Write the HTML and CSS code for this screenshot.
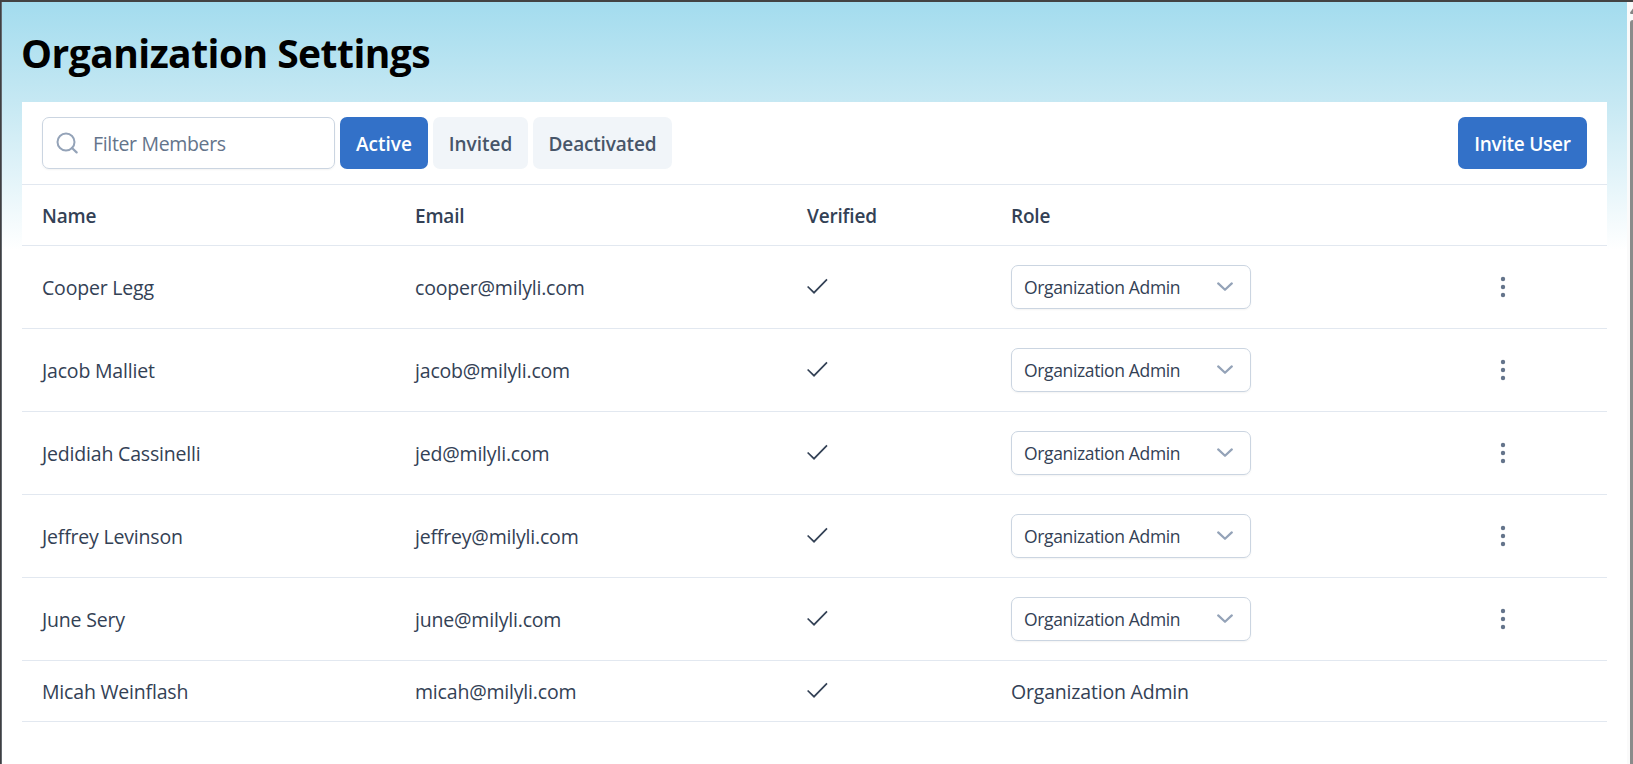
FILE: index.html
```html
<!DOCTYPE html>
<html lang="en">
<head>
    <meta charset="UTF-8">
    <meta name="viewport" content="width=device-width, initial-scale=1.0">
    <title>Organization Settings</title>
    <link rel="stylesheet" href="styles.css">
</head>
<body>

    <!-- Shared icons -->
    <svg class="sprite" width="0" height="0">
        <symbol id="check" viewBox="0 0 22 16">
            <path d="M0.6 8.5 L7 14.7 L20 1.4" fill="none" stroke="currentColor" stroke-width="1.7"/>
        </symbol>
        <symbol id="chevron" viewBox="0 0 16 10">
            <path d="M1.2 1.4 L8 7.8 L14.8 1.4" fill="none" stroke="currentColor" stroke-width="2.2" stroke-linecap="round" stroke-linejoin="round"/>
        </symbol>
        <symbol id="dots" viewBox="0 0 6 22">
            <circle cx="3" cy="3" r="2.2" fill="currentColor"/>
            <circle cx="3" cy="11" r="2.2" fill="currentColor"/>
            <circle cx="3" cy="19" r="2.2" fill="currentColor"/>
        </symbol>
    </svg>

    <div class="window">
        <div class="page">
            <h1>Organization Settings</h1>

            <div class="panel">
                <!-- Toolbar -->
                <div class="toolbar">
                    <div class="search">
                        <svg width="22" height="22" viewBox="0 0 22 22">
                            <circle cx="10" cy="10" r="8.5" fill="none" stroke="#94a3b8" stroke-width="2"/>
                            <path d="M16 16 L20.6 20.4" stroke="#94a3b8" stroke-width="2.2" stroke-linecap="round"/>
                        </svg>
                        <input type="text" placeholder="Filter Members">
                    </div>
                    <button class="btn active">Active</button>
                    <button class="btn invited">Invited</button>
                    <button class="btn deactivated">Deactivated</button>
                    <button class="btn active invite">Invite User</button>
                </div>

                <!-- Members -->
                <table>
                    <colgroup>
                        <col class="col-name">
                        <col class="col-email">
                        <col class="col-verified">
                        <col class="col-role">
                        <col>
                    </colgroup>
                    <thead>
                        <tr>
                            <th>Name</th>
                            <th>Email</th>
                            <th>Verified</th>
                            <th>Role</th>
                            <th></th>
                        </tr>
                    </thead>
                    <tbody>
                        <tr>
                            <td>Cooper Legg</td>
                            <td class="email">cooper@milyli.com</td>
                            <td><svg class="check"><use href="#check"/></svg></td>
                            <td><div class="select"><span>Organization Admin</span><svg class="chevron"><use href="#chevron"/></svg></div></td>
                            <td><div class="menu"><svg class="dots"><use href="#dots"/></svg></div></td>
                        </tr>
                        <tr>
                            <td>Jacob Malliet</td>
                            <td class="email">jacob@milyli.com</td>
                            <td><svg class="check"><use href="#check"/></svg></td>
                            <td><div class="select"><span>Organization Admin</span><svg class="chevron"><use href="#chevron"/></svg></div></td>
                            <td><div class="menu"><svg class="dots"><use href="#dots"/></svg></div></td>
                        </tr>
                        <tr>
                            <td>Jedidiah Cassinelli</td>
                            <td class="email">jed@milyli.com</td>
                            <td><svg class="check"><use href="#check"/></svg></td>
                            <td><div class="select"><span>Organization Admin</span><svg class="chevron"><use href="#chevron"/></svg></div></td>
                            <td><div class="menu"><svg class="dots"><use href="#dots"/></svg></div></td>
                        </tr>
                        <tr>
                            <td>Jeffrey Levinson</td>
                            <td class="email">jeffrey@milyli.com</td>
                            <td><svg class="check"><use href="#check"/></svg></td>
                            <td><div class="select"><span>Organization Admin</span><svg class="chevron"><use href="#chevron"/></svg></div></td>
                            <td><div class="menu"><svg class="dots"><use href="#dots"/></svg></div></td>
                        </tr>
                        <tr>
                            <td>June Sery</td>
                            <td class="email">june@milyli.com</td>
                            <td><svg class="check"><use href="#check"/></svg></td>
                            <td><div class="select"><span>Organization Admin</span><svg class="chevron"><use href="#chevron"/></svg></div></td>
                            <td><div class="menu"><svg class="dots"><use href="#dots"/></svg></div></td>
                        </tr>
                        <tr class="own">
                            <td>Micah Weinflash</td>
                            <td class="email">micah@milyli.com</td>
                            <td><svg class="check"><use href="#check"/></svg></td>
                            <td>Organization Admin</td>
                            <td></td>
                        </tr>
                    </tbody>
                </table>
            </div>
        </div>

        <!-- Scrollbar -->
        <div class="scrollbar">
            <svg width="3" height="6" viewBox="0 0 3 6">
                <path d="M0 4.5 L3 0.5 V6 H1 Q0 6 0 4.5 Z" fill="#858585"/>
            </svg>
            <div class="thumb"></div>
        </div>
    </div>

</body>
</html>
```
FILE: styles.css
```css
* {
    box-sizing: border-box;
}
body {
    font-family: 'Segoe UI', 'Open Sans', sans-serif;
    margin: 0;
    background-color: #fff;
    color: #334155;
}
.sprite {
    display: none;
}
.window {
    display: flex;
    height: 100vh;
    overflow: hidden;
    border-top: 2px solid #434343;
    border-left: 1px solid #3f3f41;
}
.page {
    flex: 1;
    padding: 0 20px;
    border-left: 1px solid #63696f;
    background: linear-gradient(#a3dcee 0, #c5e8f3 98px, #fff 248px);
}
h1 {
    margin: 0 0 0 -1px;
    height: 100px;
    line-height: 102px;
    font-size: 39px;
    font-weight: 700;
    letter-spacing: -0.54px;
    color: #000;
}
.panel {
    background: #fff;
}
.toolbar {
    display: flex;
    gap: 5px;
    padding: 15px 20px;
    border-bottom: 1px solid #e2e8f0;
}
.search {
    display: flex;
    align-items: center;
    gap: 15px;
    width: 293px;
    height: 52px;
    padding: 0 13px;
    border: 1px solid #cbd5e1;
    border-radius: 7px;
    box-shadow: 0 1px 2px rgba(18, 18, 23, 0.05);
}
.search svg {
    flex-shrink: 0;
}
.search input {
    flex: 1;
    min-width: 0;
    padding: 0;
    border: none;
    outline: none;
    background: none;
    font-family: inherit;
    font-size: 19.5px;
    letter-spacing: -0.34px;
}
.search input::placeholder {
    color: #64748b;
}
.btn {
    height: 52px;
    padding: 2px 0 0;
    border: none;
    border-radius: 7px;
    background: #f1f5f9;
    color: #475569;
    font-family: inherit;
    font-size: 19px;
    font-weight: 600;
    cursor: pointer;
}
.btn.active {
    width: 88px;
    background: #3371c8;
    color: #fff;
}
.btn.invited {
    width: 95px;
}
.btn.deactivated {
    width: 139px;
    letter-spacing: -0.16px;
}
.btn.invite {
    width: 129px;
    margin-left: auto;
    letter-spacing: -0.25px;
}
table {
    width: 100%;
    table-layout: fixed;
    border-collapse: separate;
    border-spacing: 0;
}
.col-name {
    width: 373px;
}
.col-email {
    width: 392px;
}
.col-verified {
    width: 204px;
}
.col-role {
    width: 471px;
}
th, td {
    padding: 0 20px;
    text-align: left;
    vertical-align: middle;
    border-bottom: 1px solid #e2e8f0;
}
th {
    height: 61px;
    padding-top: 2px;
    font-size: 19px;
    font-weight: 600;
    letter-spacing: -0.18px;
}
td {
    height: 83px;
    font-size: 19.5px;
    letter-spacing: -0.19px;
}
.own td {
    height: 61px;
}
.check {
    display: block;
    width: 22px;
    height: 16px;
    margin-bottom: 2px;
}
.select {
    display: flex;
    align-items: center;
    justify-content: space-between;
    width: 240px;
    height: 44px;
    padding: 0 17px 0 12px;
    border: 1px solid #cbd5e1;
    border-radius: 7px;
    box-shadow: 0 1px 2px rgba(18, 18, 23, 0.05);
    font-size: 17.5px;
    letter-spacing: -0.36px;
}
.chevron {
    width: 16px;
    height: 10px;
    color: #94a3b8;
}
.menu {
    display: flex;
    justify-content: center;
    width: 41px;
}
.dots {
    width: 6px;
    height: 22px;
    color: #64748b;
}
.scrollbar {
    width: 6px;
    padding: 6px 0 0 3px;
    background: #fafafa;
}
.scrollbar svg {
    display: block;
}
.thumb {
    height: 100%;
    margin-top: 6px;
    background: #8b8b8b;
    border-top-left-radius: 3px;
}
```
